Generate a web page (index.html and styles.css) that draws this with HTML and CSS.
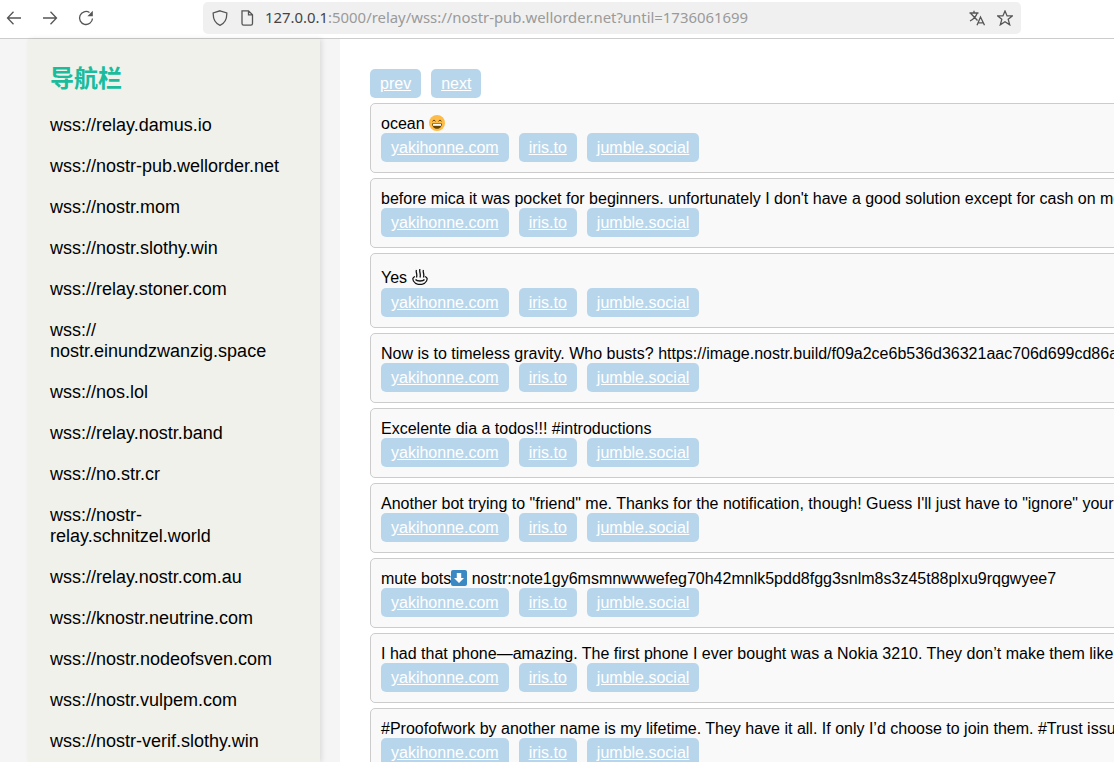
FILE: index.html
```html
<!DOCTYPE html>
<html lang="zh">
<head>
<meta charset="utf-8">
<title>Relay</title>
<link rel="stylesheet" href="styles.css">
</head>
<body>
<header class="toolbar">
  <div class="nav-buttons">
    <svg class="icon" viewBox="0 0 16 16"><path d="M15 8H1.500M7.500 1.800 1.500 8l6 6.200"/></svg>
    <svg class="icon" viewBox="0 0 16 16"><path d="M1 8h13.500M8.500 1.800l6 6.200-6 6.200"/></svg>
    <svg class="icon" viewBox="0 0 16 16"><path d="M14.500 8.500A6.500 6.500 0 1 1 11.500 2.500"/><path class="solid" d="M14.800.8V6.200H9.400Z"/></svg>
  </div>
  <div class="urlbar">
    <svg class="icon shield" viewBox="0 0 16 16"><path d="M8 .8 14.800 3C15 9 12.800 13.300 8 15.300 3.200 13.300 1 9 1.200 3Z"/></svg>
    <svg class="icon doc" viewBox="0 0 16 16"><path d="M3 .8H9.500L13.500 4.800V13.500A1.700 1.700 0 0 1 11.800 15.200H4.700A1.700 1.700 0 0 1 3 13.500ZM9.500 .8V4.800H13.500"/></svg>
    <span class="url"><span class="host">127.0.0.1</span>:5000/relay/wss://nostr-pub.wellorder.net?until=1736061699</span>
    <svg class="icon translate" viewBox="0 0 16 16"><path d="M.5 3H9.500M5 .8V3M1.800 3.500 8.500 10.500M8 3.500C7 6.500 4.500 9.300 1 11M8 15.300 11.500 7 15.500 15.300M9.200 12.800H14"/></svg>
    <svg class="icon star" viewBox="0 0 16 16"><path d="M8 1 10.100 5.900H15.300L11.200 9.300 12.700 14.800 8 11.700 3.300 14.800 4.800 9.300.7 5.900H5.900Z"/></svg>
  </div>
</header>
<div class="layout">
  <aside class="sidebar">
    <h2 class="sidebar-title">导航栏</h2>
    <ul class="relay-list">
      <li><a href="#">wss://relay.damus.io</a></li>
      <li><a href="#">wss://nostr-pub.wellorder.net</a></li>
      <li><a href="#">wss://nostr.mom</a></li>
      <li><a href="#">wss://nostr.slothy.win</a></li>
      <li><a href="#">wss://relay.stoner.com</a></li>
      <li><a href="#">wss://<br>nostr.einundzwanzig.space</a></li>
      <li><a href="#">wss://nos.lol</a></li>
      <li><a href="#">wss://relay.nostr.band</a></li>
      <li><a href="#">wss://no.str.cr</a></li>
      <li><a href="#">wss://nostr-<br>relay.schnitzel.world</a></li>
      <li><a href="#">wss://relay.nostr.com.au</a></li>
      <li><a href="#">wss://knostr.neutrine.com</a></li>
      <li><a href="#">wss://nostr.nodeofsven.com</a></li>
      <li><a href="#">wss://nostr.vulpem.com</a></li>
      <li><a href="#">wss://nostr-verif.slothy.win</a></li>
    </ul>
  </aside>
  <main class="content">
    <div class="pager"><a class="btn" href="#">prev</a><a class="btn" href="#">next</a></div>
    <article class="card">
      <p class="text">ocean <svg class="emoji" viewBox="0 0 16 16"><circle cx="8" cy="8" r="8" fill="#fdbb47"/><path d="M3.500 6.300 5 5 6.500 6.300M9.500 6.300 11 5 12.500 6.300" fill="none" stroke="#664500" stroke-width="1"/><path d="M3 8.500H13C12.800 11.800 10.700 13.800 8 13.800S3.200 11.800 3 8.500Z" fill="#664500"/><path d="M4 9H12V10.800H4Z" fill="#fff"/></svg></p>
      <div class="links"><a class="btn" href="#">yakihonne.com</a><a class="btn" href="#">iris.to</a><a class="btn" href="#">jumble.social</a></div>
    </article>
    <article class="card">
      <p class="text">before mica it was pocket for beginners. unfortunately I don't have a good solution except for cash on mobile for now</p>
      <div class="links"><a class="btn" href="#">yakihonne.com</a><a class="btn" href="#">iris.to</a><a class="btn" href="#">jumble.social</a></div>
    </article>
    <article class="card">
      <p class="text tall">Yes <svg class="emoji" viewBox="0 0 16 16"><path d="M4.500 1C3.300 3 5.700 4.500 4.500 8.500M8 0C6.800 2.500 9.200 4.500 8 8.500M11.500 1C10.300 3 12.700 4.500 11.500 8.500M3 7.500C.5 8.500.5 10 1.500 12 3 14.800 5.500 15.500 8 15.500S13 14.800 14.500 12C15.500 10 15.500 8.500 13 7.500M3.500 10.500C5 12.500 11 12.500 12.500 10.500" fill="none" stroke="#111" stroke-width="1.300"/></svg></p>
      <div class="links"><a class="btn" href="#">yakihonne.com</a><a class="btn" href="#">iris.to</a><a class="btn" href="#">jumble.social</a></div>
    </article>
    <article class="card">
      <p class="text">Now is to timeless gravity. Who busts? https://image.nostr.build/f09a2ce6b536d36321aac706d699cd86a</p>
      <div class="links"><a class="btn" href="#">yakihonne.com</a><a class="btn" href="#">iris.to</a><a class="btn" href="#">jumble.social</a></div>
    </article>
    <article class="card">
      <p class="text">Excelente dia a todos!!! #introductions</p>
      <div class="links"><a class="btn" href="#">yakihonne.com</a><a class="btn" href="#">iris.to</a><a class="btn" href="#">jumble.social</a></div>
    </article>
    <article class="card">
      <p class="text">Another bot trying to "friend" me. Thanks for the notification, though! Guess I'll just have to "ignore" your</p>
      <div class="links"><a class="btn" href="#">yakihonne.com</a><a class="btn" href="#">iris.to</a><a class="btn" href="#">jumble.social</a></div>
    </article>
    <article class="card">
      <p class="text">mute bots<svg class="emoji" viewBox="0 0 16 16"><rect width="16" height="16" rx="2" fill="#3b88c3"/><path d="M5.800 3H10.200V8H13L8 13 3 8H5.800Z" fill="#fff"/></svg> nostr:note1gy6msmnwwwefeg70h42mnlk5pdd8fgg3snlm8s3z45t88plxu9rqgwyee7</p>
      <div class="links"><a class="btn" href="#">yakihonne.com</a><a class="btn" href="#">iris.to</a><a class="btn" href="#">jumble.social</a></div>
    </article>
    <article class="card">
      <p class="text">I had that phone—amazing. The first phone I ever bought was a Nokia 3210. They don’t make them like</p>
      <div class="links"><a class="btn" href="#">yakihonne.com</a><a class="btn" href="#">iris.to</a><a class="btn" href="#">jumble.social</a></div>
    </article>
    <article class="card">
      <p class="text">#Proofofwork by another name is my lifetime. They have it all. If only I’d choose to join them. #Trust issues</p>
      <div class="links"><a class="btn" href="#">yakihonne.com</a><a class="btn" href="#">iris.to</a><a class="btn" href="#">jumble.social</a></div>
    </article>
  </main>
</div>
</body>
</html>
```
FILE: styles.css
```css
* { box-sizing: border-box; }
html, body { height: 100%; margin: 0; overflow: hidden; }
body {
  display: flex;
  flex-direction: column;
  background: #f5f5f5;
  color: #000;
  font-family: "Liberation Sans", Arial, sans-serif;
  font-size: 16px;
}
.toolbar {
  flex: none;
  display: flex;
  align-items: center;
  height: 39px;
  padding: 2px 93px 4px 6px;
  background: #fff;
  border-bottom: 1px solid #ccc;
}
.nav-buttons { display: flex; gap: 20px; width: 197px; flex: none; }
.icon {
  flex: none;
  width: 16px;
  height: 16px;
  fill: none;
  stroke: #555;
  stroke-width: 1.300;
}
.icon .solid { fill: #555; stroke: none; }
.urlbar {
  flex: 1;
  display: flex;
  align-items: center;
  height: 32px;
  padding: 0 8px 0 9px;
  background: #f0f0f0;
  border-radius: 5px;
}
.shield { margin-right: 11px; }
.doc { margin-right: 10px; }
.url {
  flex: 1;
  margin-bottom: 2px;
  color: #9a9a9a;
  font-family: "Noto Sans", sans-serif;
  font-size: 14.900px;
  line-height: 20px;
  white-space: nowrap;
}
.host { color: #444; }
.translate { margin-right: 12px; }
.layout {
  flex: 1;
  min-height: 0;
  display: flex;
  padding-left: 28px;
}
.sidebar {
  flex: none;
  width: 292px;
  margin-right: 20px;
  padding: 23px 22px 0;
  background: #f0f1eb;
  box-shadow: 2px 0 5px rgba(0, 0, 0, .1);
}
.sidebar-title {
  margin: 0 0 19px;
  color: #1abc9c;
  font-family: "Liberation Sans", "Noto Sans CJK SC", sans-serif;
  font-size: 24px;
  font-weight: 700;
  line-height: 34px;
}
.relay-list { margin: 0; padding: 0; list-style: none; }
.relay-list li { margin-bottom: 20px; font-size: 18px; line-height: 21px; }
.relay-list a { color: #000; text-decoration: none; }
.content {
  flex: 1;
  min-width: 0;
  padding: 30px;
  background: #fff;
  overflow: hidden;
}
.pager { display: flex; gap: 10px; margin-bottom: 5px; }
.btn {
  display: block;
  padding: 5px 10px;
  background: #b8d6eb;
  border-radius: 5px;
  color: #fff;
  line-height: 19px;
}
.card {
  width: 900px;
  margin-bottom: 5px;
  padding: 10px;
  background: #f9f9f9;
  border: 1px solid #ccc;
  border-radius: 5px;
}
.text { margin: 0; line-height: 19px; white-space: nowrap; }
.text.tall { padding-top: 4px; line-height: 20px; }
.emoji { width: 16px; height: 16px; vertical-align: -2px; }
.links { display: flex; gap: 10px; }
```
